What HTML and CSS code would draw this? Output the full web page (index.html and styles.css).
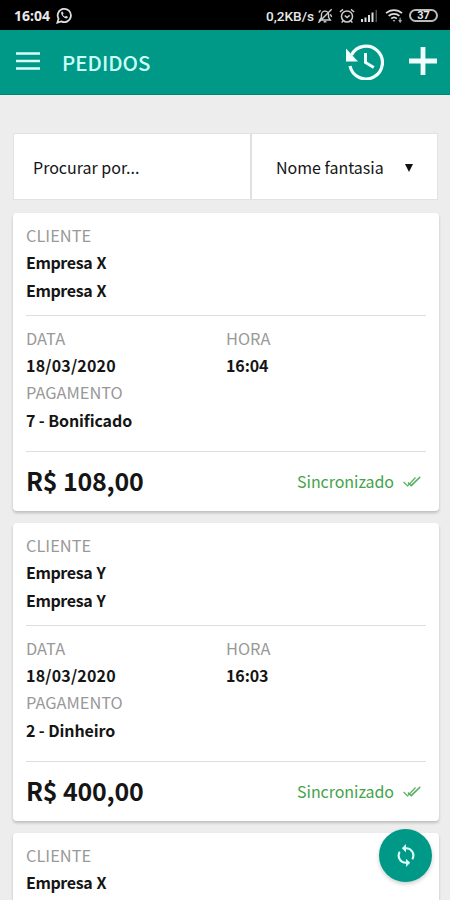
FILE: index.html
```html
<!DOCTYPE html>
<html lang="pt-BR">
<head>
<meta charset="utf-8">
<meta name="viewport" content="width=device-width, initial-scale=1">
<title>Pedidos</title>
<link rel="stylesheet" href="styles.css">
</head>
<body>
<div class="statusbar">
  <span class="clock">16:04</span>
  <svg class="whatsapp" viewBox="0 0 18 18" width="17" height="17"><path d="M1.500 16.500l1.200-4.100a7 7 0 1 1 2.900 2.800z" fill="none" stroke="#ddd" stroke-width="1.900"/><path d="M6 5c-1 1-.6 3 1.300 5s4 2.600 5 1.500l.2-1.200-2-1-1 1c-1-.4-2-1.300-2.300-2.300l.8-.9-.8-2z" fill="#ddd"/></svg>
  <span class="speed">0,2KB/s</span>
  <svg class="mute" viewBox="0 0 18 18" width="16" height="16" fill="none" stroke="#ccc" stroke-width="1.600"><path d="M3 13.500h12l-2-3V7.500a4 4 0 0 0-8 0v3zM7.500 15.500h3M1.500 16.500l15-15M2 5l2-2.500M15 7l1.500 3"/></svg>
  <svg class="alarm" viewBox="0 0 18 18" width="16" height="16" fill="none" stroke="#ccc" stroke-width="1.700"><circle cx="9" cy="9.500" r="6.200"/><path d="M1 4.500L4.500 1.500M17 4.500l-3.500-3M6.500 8.500L9 10.800l3-2.500M4.500 14.500L3 16.500M13.500 14.500l1.500 2"/></svg>
  <svg class="signal" viewBox="0 0 18 14" width="18" height="14"><path d="M1 10h2v3H1zM4.500 8.500h2V13h-2zM8 6h2v7H8zM11.500 3.500h2V13h-2z" fill="#ddd"/><path d="M15.500 1h1.500v12h-1.500z" fill="#555"/></svg>
  <svg class="wifi" viewBox="0 0 20 16" width="19" height="15" fill="none" stroke="#ddd" stroke-width="1.900"><path d="M1 5.500a12.500 12.500 0 0 1 17 0M3.800 8.500a8.300 8.300 0 0 1 11.400 0M6.500 11.300a4.500 4.500 0 0 1 6 0"/><path d="M8 13h3l-1.500 1.700z" fill="#ddd" stroke="none"/><path d="M16 10.500v4.500M14.500 13l1.500 2 1.500-2" stroke="#aaa" stroke-width="1.200"/></svg>
  <span class="battery">37</span>
</div>
<header class="appbar">
  <svg class="menu" viewBox="0 0 24 18" width="24" height="18"><path d="M0 1.500h24M0 9h24M0 16.500h24" stroke="#d8fffa" stroke-width="2.700"/></svg>
  <h1>PEDIDOS</h1>
  <svg class="history" viewBox="0 0 38 37" width="38" height="37"><path fill="none" stroke="#f1fffd" stroke-width="3.200" d="M5.500 12A16.400 16.400 0 1 1 4 23"/><path fill="#f1fffd" d="M0 5.500V18.500H12z"/><path fill="none" stroke="#f1fffd" stroke-width="3" d="M19.500 10v9.500l8.300 5"/></svg>
  <svg class="plus" viewBox="0 0 28 28" width="28" height="28"><path d="M14 0v28M0 14h28" stroke="#f1fffd" stroke-width="4.800"/></svg>
</header>
<main>
  <div class="search">
    <div class="query">Procurar por...</div>
    <div class="filter"><span>Nome fantasia</span><i class="caret"></i></div>
  </div>

  <article class="card">
    <section class="client"><span class="label">CLIENTE</span><b class="name">Empresa X</b><b class="name">Empresa X</b></section>
    <section class="info">
      <div><span class="label">DATA</span><b class="date">18/03/2020</b><span class="label">PAGAMENTO</span><b class="pay">7 - Bonificado</b></div>
      <div><span class="label">HORA</span><b class="time">16:04</b></div>
    </section>
    <footer><strong>R$ 108,00</strong><span class="sync">Sincronizado</span><svg class="checks" viewBox="0 0 18 12" width="18" height="12"><path d="M.6 6l4 4L12.500 1.500M5 6.500l3.300 3.500L17.300 1M7.500 10L17 1" fill="none" stroke="#57b05c" stroke-width="1.200"/></svg></footer>
  </article>

  <article class="card">
    <section class="client"><span class="label">CLIENTE</span><b class="name">Empresa Y</b><b class="name">Empresa Y</b></section>
    <section class="info">
      <div><span class="label">DATA</span><b class="date">18/03/2020</b><span class="label">PAGAMENTO</span><b class="pay">2 - Dinheiro</b></div>
      <div><span class="label">HORA</span><b class="time">16:03</b></div>
    </section>
    <footer><strong>R$ 400,00</strong><span class="sync">Sincronizado</span><svg class="checks" viewBox="0 0 18 12" width="18" height="12"><path d="M.6 6l4 4L12.500 1.500M5 6.500l3.300 3.500L17.300 1M7.500 10L17 1" fill="none" stroke="#57b05c" stroke-width="1.200"/></svg></footer>
  </article>

  <article class="card last">
    <section class="client"><span class="label">CLIENTE</span><b class="name">Empresa X</b></section>
  </article>
</main>
<button class="fab" aria-label="Sincronizar"><svg viewBox="4 1 16 22" width="18" height="23"><path fill="#d8fffa" d="M12 4V1L8 5l4 4V6a6 6 0 0 1 5.250 8.900l1.460 1.460A8 8 0 0 0 12 4zm0 14a6 6 0 0 1-5.250-8.900L5.290 7.640A8 8 0 0 0 12 20v3l4-4-4-4z"/></svg></button>
</body>
</html>
```
FILE: styles.css
```css
* { box-sizing: border-box; }
body {
  margin: 0;
  height: 900px;
  overflow: hidden;
  background: #ededed;
  color: #151515;
  font-family: "Noto Sans CJK JP", "Noto Sans", sans-serif;
  font-size: 16px;
}
svg { display: block; flex: none; }

.statusbar {
  height: 30px;
  background: #000;
  color: #e8e8e8;
  display: flex;
  align-items: center;
  padding: 1px 12px 0 14px;
  font: 700 14px/28px "Noto Sans", sans-serif;
}
.clock { width: 42px; }
.speed {
  margin-left: auto;
  margin-right: 3px;
  font: 500 13.6px/28px Roboto, sans-serif;
}
.alarm { margin-left: 6px; }
.signal { margin-left: 5px; }
.wifi { margin: 0 5px 0 7px; }
.battery {
  width: 29px;
  height: 13px;
  border: 2px solid #bbb;
  border-radius: 7px;
  font: 700 11px/9px Roboto, sans-serif;
  text-align: center;
}

.appbar {
  height: 65px;
  background: #009886;
  border-bottom: 1px solid #078374;
  display: flex;
  align-items: center;
  padding: 0 13px 1px 16px;
}
.menu { margin-top: -2px; }
.appbar h1 {
  margin: 0 auto 0 22px;
  color: #cafff8;
  font-size: 20.500px;
  line-height: 30px;
  font-weight: 500;
}
.plus { margin-left: 25px; margin-top: -1px; }

main { height: 805px; padding: 38px 11px 0 13px; overflow: hidden; }
.search {
  display: flex;
  height: 67px;
  margin: 0 1px 0 0;
  background: #fff;
  border: 1px solid #e2e2e2;
  line-height: 67px;
}
.query { width: 238px; padding-left: 19px; border-right: 2px solid #e0e0e0; }
.filter { flex: 1; display: flex; align-items: center; padding: 0 24px 0 24px; justify-content: space-between; }
.filter span { padding-top: 1px; }
.caret {
  width: 8px;
  height: 8px;
  margin-top: 3px;
  background: #111;
  clip-path: polygon(0 0, 100% 0, 50% 100%);
}

.card {
  height: 298px;
  margin-top: 12px;
  padding: 9px 13px 0;
  background: #fff;
  border-radius: 4px;
  box-shadow: 0 2px 3px rgba(0, 0, 0, .2);
  line-height: 27.4px;
}
.search + .card { margin-top: 13px; }
.card.last { height: 70px; overflow: hidden; border-radius: 4px 4px 0 0; }
.card span, .card b { display: block; white-space: nowrap; }
.card .label { color: #999; font-size: 16.400px; }
.name { letter-spacing: -0.4px; word-spacing: 1px; }
.date { letter-spacing: 0.2px; }
.time { letter-spacing: -0.1px; }
.pay { letter-spacing: -0.1px; }
.client { height: 94px; border-bottom: 1px solid #dedede; }
.last .client { height: 61px; border: 0; }
.info {
  height: 136px;
  padding-top: 8.600px;
  display: grid;
  grid-template-columns: 200px 1fr;
  border-bottom: 1px solid #dedede;
}
.card footer { height: 59px; display: flex; align-items: center; }
.card strong { font-size: 25px; line-height: 40px; letter-spacing: -0.2px; margin: -4px auto 0 0; }
.sync { color: #43a449; letter-spacing: -0.05px; }
.checks { margin: 0 5px 0 9px; }

.fab {
  position: fixed;
  left: 379px;
  top: 829px;
  width: 53px;
  height: 53px;
  padding: 0;
  border: 0;
  border-radius: 50%;
  background: #009886;
  box-shadow: 0 2px 4px rgba(0, 0, 0, .2);
  display: flex;
  align-items: center;
  justify-content: center;
}
```
